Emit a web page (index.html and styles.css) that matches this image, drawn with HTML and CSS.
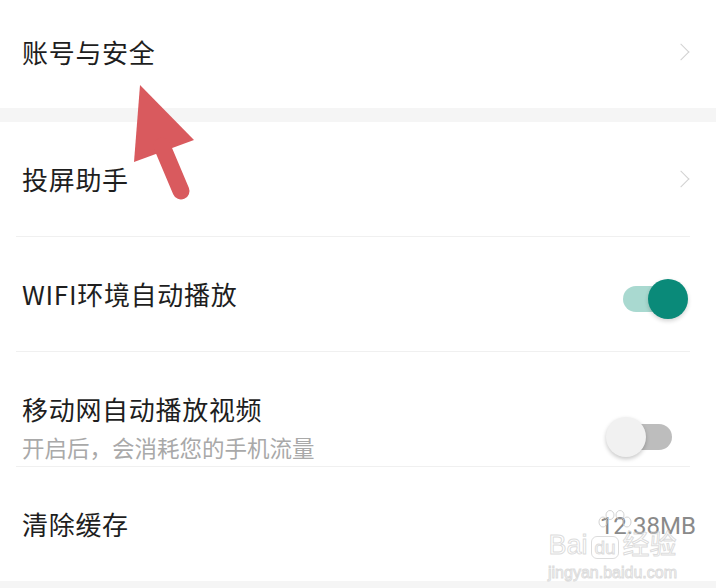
FILE: index.html
```html
<!DOCTYPE html>
<html lang="zh-CN">
<head>
<meta charset="utf-8">
<link rel="stylesheet" href="styles.css">
</head>
<body>
<div class="page">
  <div class="row first">
    <span class="title">账号与安全</span>
    <span class="chev"></span>
  </div>
  <div class="band"></div>
  <div class="row">
    <span class="title">投屏助手</span>
    <span class="chev"></span>
  </div>
  <div class="sep"></div>
  <div class="row">
    <span class="title">WIFI环境自动播放</span>
    <span class="toggle on"></span>
  </div>
  <div class="sep"></div>
  <div class="row two">
    <div class="texts">
      <span class="title">移动网自动播放视频</span>
      <span class="sub">开启后，会消耗您的手机流量</span>
    </div>
    <span class="toggle off"></span>
  </div>
  <div class="sep"></div>
  <div class="row">
    <span class="title">清除缓存</span>
    <span class="value">12.38MB</span>
  </div>
  <div class="band bottom"></div>

  <div class="watermark">
    <svg class="paw" width="36" height="20" viewBox="0 0 36 20">
      <g fill="none" stroke="rgba(200,200,200,0.8)" stroke-width="1">
        <ellipse cx="6" cy="12" rx="4" ry="5"/>
        <ellipse cx="13" cy="5" rx="4" ry="4.5"/>
        <ellipse cx="23" cy="5" rx="4" ry="4.5"/>
        <ellipse cx="30" cy="12" rx="4" ry="5"/>
      </g>
    </svg>
    <span class="wm-main">Bai<span class="wm-du">du</span>经验</span>
    <span class="wm-url">jingyan.baidu.com</span>
  </div>

  <svg class="arrow" width="716" height="588" viewBox="0 0 716 588">
    <polygon points="140,85 134,162 194,140" fill="#d95a5e"/>
    <line x1="162" y1="146" x2="181" y2="191" stroke="#d95a5e" stroke-width="17" stroke-linecap="round"/>
  </svg>
</div>
</body>
</html>
```
FILE: styles.css
```css
html, body {
  margin: 0;
  padding: 0;
  background: #ffffff;
}
.page {
  position: relative;
  width: 716px;
  height: 588px;
  overflow: hidden;
  font-family: "Noto Sans CJK SC", "Noto Sans", sans-serif;
  color: #1e1e1e;
}
.row {
  height: 114px;
  display: flex;
  align-items: center;
  justify-content: space-between;
  padding: 0 26px 0 22px;
  box-sizing: border-box;
}
.row.first {
  height: 108px;
  padding-bottom: 4px;
}
.title {
  font-size: 26px;
  letter-spacing: 0.7px;
  line-height: 32px;
}
.band {
  height: 14px;
  background: #f5f5f5;
}
.band.bottom {
  height: 7px;
}
.sep {
  height: 1px;
  background: #f0f0f0;
  margin: 0 26px 0 16px;
}
.chev {
  width: 11px;
  height: 11px;
  border-top: 1.5px solid #d2d2d2;
  border-right: 1.5px solid #d2d2d2;
  transform: rotate(45deg);
  margin-right: 3px;
}
.row.two {
  align-items: flex-start;
  padding-top: 41px;
}
.texts {
  display: flex;
  flex-direction: column;
  gap: 9px;
}
.sub {
  font-size: 22.5px;
  line-height: 27px;
  color: #a9a9a9;
}
.toggle {
  position: relative;
  width: 66px;
  height: 40px;
  display: block;
}
.toggle::before {
  content: "";
  position: absolute;
  top: 7px;
  height: 26px;
  border-radius: 13px;
}
.toggle::after {
  content: "";
  position: absolute;
  top: 0;
  width: 40px;
  height: 40px;
  border-radius: 50%;
}
.toggle.on {
  margin-top: 10px;
  margin-right: 2px;
}
.toggle.on::before {
  left: 1px;
  right: 10px;
  background: #a9d9d0;
}
.toggle.on::after {
  right: 0;
  background: #0a8a79;
  box-shadow: 0 2px 4px rgba(0, 0, 0, 0.18);
}
.toggle.off {
  margin-top: 24px;
  margin-right: 18px;
}
.toggle.off::before {
  left: 13px;
  right: 0;
  background: #bdbdbd;
}
.toggle.off::after {
  left: 0;
  background: #f1f1f1;
  box-shadow: 0 2px 4px rgba(0, 0, 0, 0.22);
}
.value {
  font-family: "Roboto", "Noto Sans", sans-serif;
  font-size: 24px;
  color: #8a8a8a;
  margin-right: -6px;
  margin-top: 4px;
}
.watermark {
  position: absolute;
  left: 548px;
  top: 510px;
  display: flex;
  flex-direction: column;
  align-items: center;
  white-space: nowrap;
  font-family: "Liberation Sans", sans-serif;
  color: transparent;
  -webkit-text-stroke: 1px rgba(205, 205, 205, 0.7);
  pointer-events: none;
}
.paw {
  display: block;
  margin-left: 6px;
}
.wm-main {
  font-size: 27px;
  line-height: 30px;
  font-family: "Liberation Sans", "Noto Sans CJK SC", sans-serif;
}
.wm-du {
  font-size: 19px;
  border: 1px solid rgba(205, 205, 205, 0.7);
  border-radius: 6px;
  padding: 0 2px;
  margin: 0 4px;
}
.wm-url {
  font-size: 16px;
  line-height: 20px;
}
.arrow {
  position: absolute;
  left: 0;
  top: 0;
  pointer-events: none;
}
```
